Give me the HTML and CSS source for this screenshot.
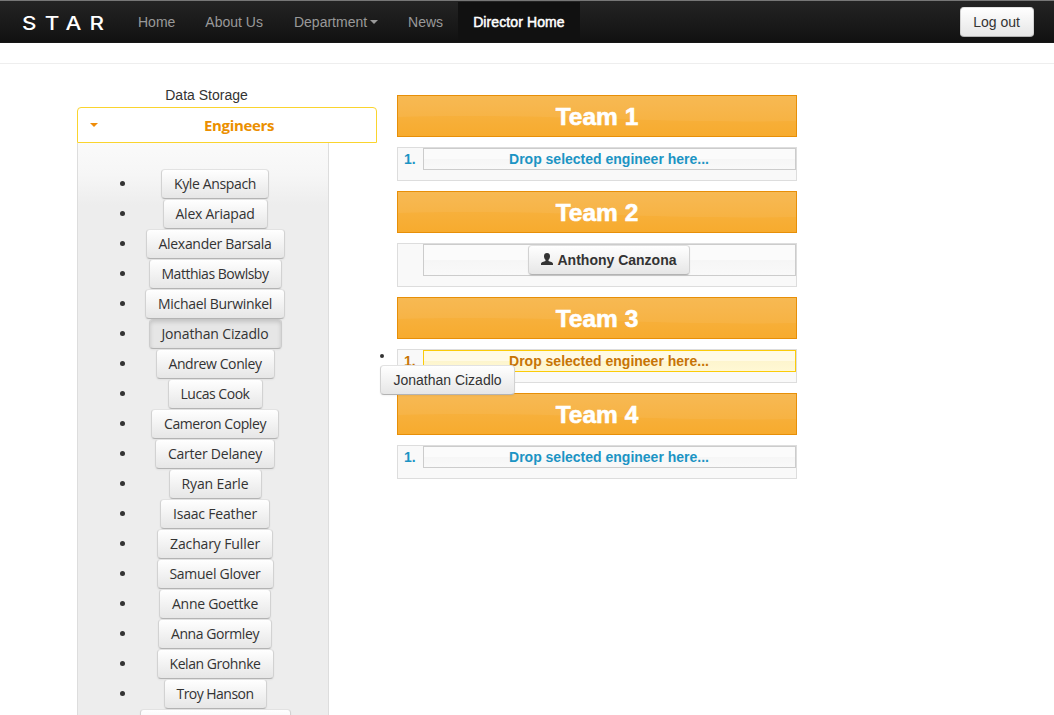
FILE: index.html
```html
<!DOCTYPE html>
<html lang="en">
<head>
<meta charset="utf-8">
<title>STAR - Director Home</title>
<link rel="stylesheet" href="styles.css">
</head>
<body>
<nav class="navbar">
  <a class="brand"><span>STAR</span></a>
  <a class="nav-link">Home</a>
  <a class="nav-link">About Us</a>
  <a class="nav-link">Department<i class="caret"></i></a>
  <a class="nav-link">News</a>
  <a class="nav-link active">Director Home</a>
  <button class="btn logout">Log out</button>
</nav>
<hr class="rule">
<main class="page">
  <section class="storage">
    <div class="storage-title">Data Storage</div>
    <div class="accordion-head"><i class="arrow"></i><span>Engineers</span></div>
    <ul class="engineers" id="engineers"></ul>
  </section>
  <section class="teams">
    <h3 class="team-head"><svg viewBox="0 0 398 40" preserveAspectRatio="none"><path d="M0 0H398V25C250 28 160 17 0 21Z"/></svg><span>Team 1</span></h3>
    <div class="team-list"><span class="num">1.</span><div class="slot">Drop selected engineer here...</div></div>
    <h3 class="team-head"><svg viewBox="0 0 398 40" preserveAspectRatio="none"><path d="M0 0H398V25C250 28 160 17 0 21Z"/></svg><span>Team 2</span></h3>
    <div class="team-list"><span class="num"></span><div class="slot filled"><button class="btn member"><svg viewBox="0 0 12 12"><path d="M6 0C8 0 9 1.3 9 3.2C9 4.8 8.4 6 7.5 6.8V8C9 8.8 12 9 12 10.8V12H0V10.8C0 9 3 8.8 4.500 8V6.800C3.600 6 3 4.800 3 3.200C3 1.300 4 0 6 0Z"/></svg>Anthony Canzona</button></div></div>
    <h3 class="team-head"><svg viewBox="0 0 398 40" preserveAspectRatio="none"><path d="M0 0H398V25C250 28 160 17 0 21Z"/></svg><span>Team 3</span></h3>
    <div class="team-list target"><span class="num">1.</span><div class="slot">Drop selected engineer here...</div>
      <div class="ghost"><i class="dot"></i><button class="btn">Jonathan Cizadlo</button></div>
    </div>
    <h3 class="team-head"><svg viewBox="0 0 398 40" preserveAspectRatio="none"><path d="M0 0H398V25C250 28 160 17 0 21Z"/></svg><span>Team 4</span></h3>
    <div class="team-list"><span class="num">1.</span><div class="slot">Drop selected engineer here...</div></div>
  </section>
</main>
<script src="app.js"></script>
</body>
</html>
```
FILE: styles.css
```css
* { box-sizing: border-box; }
body {
  display: flex;
  flex-direction: column;
  margin: 0;
  height: 715px;
  overflow: hidden;
  background: #fff;
  color: #333;
  font: 14px/20px "Liberation Sans", Arial, sans-serif;
}
.navbar {
  display: flex;
  flex: none;
  align-items: stretch;
  height: 43px;
  padding: 1px 20px 0 0;
  border-top: 1px solid #777;
  border-bottom: 1px solid #161616;
  background: linear-gradient(#242424, #111);
}
.brand {
  width: 123px;
  padding: 12px 0 0 22px;
  color: #fff;
  font: 500 19px/20px Inter, sans-serif;
  letter-spacing: 6.9px;
}
.brand span {
  display: inline-block;
  transform: scaleX(1.18);
  transform-origin: left;
}
.nav-link { padding: 10px 15px; color: #999; white-space: nowrap; }
.nav-link:nth-child(3) { padding-right: 16px; }
.nav-link.active {
  width: 122px;
  background: #111;
  color: #fff;
  letter-spacing: .1px;
  -webkit-text-stroke: .5px #fff;
}
.caret {
  display: inline-block;
  margin-left: 3px;
  border: 4px solid transparent;
  border-top-color: #999;
  border-bottom: 0;
  vertical-align: 3px;
}
.btn {
  height: 30px;
  padding: 4px 0;
  border: 1px solid #ccc;
  border-color: #e2e2e2 #d2d2d2 #b3b3b3;
  border-radius: 4px;
  background: linear-gradient(#fff, #e6e6e6);
  box-shadow: 0 1px 2px rgba(0,0,0,.05);
  color: #333;
  font: 14px/20px "Liberation Sans", Arial, sans-serif;
  white-space: nowrap;
}
.logout { width: 74px; margin: 5px 0 0 auto; padding-right: 1px; }
.rule { flex: none; width: 100%; margin: 20px 0 0; border: 0; border-top: 1px solid #eee; }
.page { display: flex; flex: 1; min-height: 0; gap: 20px; padding: 21px 0 0 77px; }
.storage { display: flex; flex-direction: column; width: 300px; min-height: 0; }
.storage-title { flex: none; padding-right: 41px; height: 22px; text-align: center; }
.accordion-head {
  display: flex;
  flex: none;
  align-items: center;
  height: 36px;
  border: 1px solid #fad42e;
  border-radius: 4px 4px 0 0;
  color: #eb8f00;
  font: 700 15px/20px "Open Sans", sans-serif;
  letter-spacing: -.35px;
}
.accordion-head span { flex: 1; margin-left: 4px; text-align: center; }
.arrow {
  margin-left: 12px;
  border: 4px solid transparent;
  border-top-color: #ef8c08;
  border-bottom: 0;
}
.engineers {
  flex: 1;
  width: 252px;
  min-height: 0;
  overflow: hidden;
  margin: 0;
  padding: 26px 0 0;
  border: 1px solid #ddd;
  border-width: 0 1px;
  background: linear-gradient(#fafafa, #f6f6f6 32px, #ededed 62px, #ededed);
  list-style: none;
}
.engineers li { display: flex; align-items: center; height: 30px; padding-left: 42px; }
.dot { display: block; width: 5px; height: 5px; border-radius: 50%; background: #333; }
.engineers .dot { margin-top: -1px; }
.names { display: flex; justify-content: center; width: 180px; }
.names .btn { font-family: "Open Sans", sans-serif; }
.btn.pressed {
  background: #e6e6e6;
  border-color: #c8c8c8 #ccc #b3b3b3;
  box-shadow: inset 0 2px 4px rgba(0,0,0,.15), 0 1px 2px rgba(0,0,0,.05);
}
.teams { width: 400px; padding-top: 10px; }
.team-head {
  display: grid;
  height: 42px;
  margin: 0;
  border: 1px solid #e78f08;
  background: linear-gradient(#f7b549, #f7ab2e);
  color: #fff;
  font-size: 24.5px;
  line-height: 41px;
  text-align: center;
}
.team-head svg { grid-area: 1 / 1; width: 398px; height: 40px; fill: #fff; fill-opacity: .06; }
.team-head span { grid-area: 1 / 1; -webkit-text-stroke: .6px #fff; }
.team-list {
  position: relative;
  display: flex;
  margin: 10px 0;
  padding-bottom: 10px;
  border: 1px solid #ddd;
  background: #f9f9f9;
  color: #1c94c4;
  font-weight: 700;
}
.num { width: 25px; padding: 1px 0 0 6px; }
.slot {
  flex: 1;
  height: 22px;
  padding-right: 1px;
  border: 1px solid #ccc;
  background: linear-gradient(#fbfbfb 50%, #f6f6f6 50%, #f9f9f9);
  text-align: center;
}
.slot.filled { height: 32px; padding-right: 2px; }
.member {
  display: inline-flex;
  align-items: center;
  justify-content: center;
  width: 162px;
  font-weight: 700;
}
.member svg { width: 12px; height: 12px; margin: -2px 5px 0 0; fill: #333; }
.target { color: #c77405; }
.target .slot { border-color: #fbcb09; background: linear-gradient(#fffae5 50%, #fdf5ce 50%, #fff8d4); }
.ghost { position: absolute; left: -18px; top: 4px; z-index: 2; }
.ghost .dot { width: 4px; height: 4px; }
.ghost .btn { width: 135px; margin-top: 7px; }
```
FILE: app.js
```js
// Each engineer: name, button width in px, pressed state
const engineers = [
  ["Kyle Anspach", 108], ["Alex Ariapad", 105], ["Alexander Barsala", 139],
  ["Matthias Bowlsby", 133], ["Michael Burwinkel", 140], ["Jonathan Cizadlo", 133, true],
  ["Andrew Conley", 119], ["Lucas Cook", 95], ["Cameron Copley", 128],
  ["Carter Delaney", 120], ["Ryan Earle", 93], ["Isaac Feather", 110],
  ["Zachary Fuller", 116], ["Samuel Glover", 117], ["Anne Goettke", 112],
  ["Anna Gormley", 114], ["Kelan Grohnke", 117], ["Troy Hanson", 103], ["", 151]
];
const list = document.getElementById("engineers");
for (const [name, width, pressed] of engineers) {
  const li = document.createElement("li");
  const dot = document.createElement("i");
  dot.className = "dot";
  const holder = document.createElement("div");
  holder.className = "names";
  const btn = document.createElement("button");
  btn.className = pressed ? "btn pressed" : "btn";
  btn.style.width = width + "px";
  const label = document.createElement("span");
  label.textContent = name;
  btn.append(label);
  holder.append(btn);
  li.append(dot, holder);
  list.append(li);
  // Track the label so it keeps a 12px inset on both sides
  if (name) {
    const extra = width - 26 - label.getBoundingClientRect().width;
    label.style.letterSpacing = (extra / name.length).toFixed(3) + "px";
  }
}
```
